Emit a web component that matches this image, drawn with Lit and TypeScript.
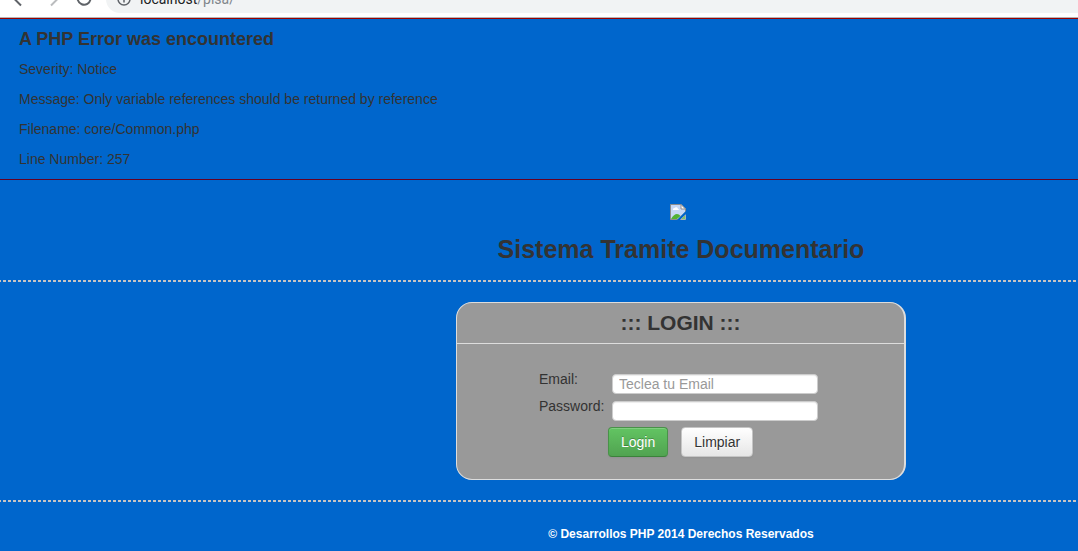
import { LitElement, html, css } from "lit";
import { customElement, state } from "lit/decorators.js";

@customElement("browser-bar")
class BrowserBar extends LitElement {
  static styles = css`
    :host {
      display: flex;
      align-items: flex-end;
      height: 17px;
      overflow: hidden;
      background: #fff;
      border-bottom: 1px solid #b6b4b6;
    }
    .icons {
      display: flex;
      flex: none;
      gap: 18px;
      width: 98px;
      box-sizing: border-box;
      padding: 0 0 10px 8px;
    }
    .icons svg { display: block; width: 16px; height: 16px; }
    .address {
      display: flex;
      flex: 1;
      align-items: center;
      box-sizing: border-box;
      height: 28px;
      margin: 0 0 4px 8px;
      padding-left: 11px;
      gap: 9px;
      background: #f1f3f4;
      border-radius: 14px 0 0 14px;
      font: 14px/20px Roboto, sans-serif;
      color: #202124;
    }
    .address svg { width: 14px; height: 14px; }
    .path { color: #80868b; }
  `;

  render() {
    return html`
      <div class="icons">
        <svg viewBox="0 0 16 16" fill="none" stroke="#5f6368" stroke-width="2"><path d="M16 7.500H6M13 .5L6 7.500l7 7" /></svg>
        <svg viewBox="0 0 16 16" fill="none" stroke="#babcbe" stroke-width="2"><path d="M6 7.500h10M9 .5l7 7-7 7" /></svg>
        <svg viewBox="0 0 16 16" fill="none" stroke="#5f6368" stroke-width="2"><path d="M13 3a6.500 6.500 0 1 0 1.500 5M14 0v5H9" /></svg>
      </div>
      <div class="address">
        <svg viewBox="0 0 14 14" fill="none" stroke="#5f6368" stroke-width="1.500"><circle cx="7" cy="7" r="6" /><path d="M7 6v4.500M7 3v1.500" /></svg>
        <span>localhost<span class="path">/pisa/</span></span>
      </div>
    `;
  }
}

@customElement("php-notice")
class PhpNotice extends LitElement {
  static styles = css`
    :host {
      display: block;
      padding: 10px 19px 0;
      border-top: 1px solid #990000;
      border-bottom: 1px solid #660022;
    }
    h4 { margin: 0 0 10px; font-size: 18px; line-height: 20px; }
    p { margin: 0 0 10px; }
  `;

  private lines = [
    "Severity: Notice",
    "Message: Only variable references should be returned by reference",
    "Filename: core/Common.php",
    "Line Number: 257",
  ];

  render() {
    return html`
      <h4>A PHP Error was encountered</h4>
      ${this.lines.map((line) => html`<p>${line}</p>`)}
    `;
  }
}

@customElement("login-panel")
class LoginPanel extends LitElement {
  static styles = css`
    :host {
      display: block;
      box-sizing: border-box;
      width: 450px;
      border: 1px solid #ddd;
      border-right-width: 2px;
      border-radius: 16px;
      background: #999;
    }
    h3 {
      margin: 0;
      border-bottom: 1px solid #ddd;
      font-size: 21px;
      line-height: 40px;
      text-align: center;
    }
    form { padding: 25px 82px 22px; }
    .fields {
      display: grid;
      grid-template-columns: 73px 206px;
      row-gap: 2px;
      line-height: 20px;
    }
    input {
      box-sizing: border-box;
      width: 100%;
      height: 20px;
      margin: 5px 0 0;
      padding: 0 6px;
      border: 1px solid #ccc;
      border-radius: 4px;
      background: #fff;
      box-shadow: inset 0 1px 1px rgba(0, 0, 0, 0.075);
      color: #555;
      font: 14px/18px "Liberation Sans", Arial, sans-serif;
    }
    input::placeholder { color: #999; }
    .actions { display: flex; gap: 13px; padding: 6px 0 0 69px; }
    button {
      box-sizing: border-box;
      height: 30px;
      padding: 4px 12px;
      border: 1px solid #c5c5c5;
      border-radius: 4px;
      background: linear-gradient(#fff, #e6e6e6);
      box-shadow: inset 0 1px 0 rgba(255, 255, 255, 0.2), 0 1px 2px rgba(0, 0, 0, 0.05);
      color: #333;
      font: 14px/20px "Liberation Sans", Arial, sans-serif;
      text-shadow: 0 1px 1px rgba(255, 255, 255, 0.75);
    }
    .primary {
      border-color: #499249 #499249 #3b823b;
      background: linear-gradient(#62c462, #51a351);
      color: #fff;
      text-shadow: 0 -1px 0 rgba(0, 0, 0, 0.25);
    }
  `;

  @state() private email = "";

  render() {
    return html`
      <h3>::: LOGIN :::</h3>
      <form @submit=${(e: Event) => e.preventDefault()} @reset=${() => (this.email = "")}>
        <div class="fields">
          <label for="email">Email:</label>
          <input id="email" type="text" placeholder="Teclea tu Email" .value=${this.email}
            @input=${(e: Event) => (this.email = (e.target as HTMLInputElement).value)} />
          <label for="password">Password:</label>
          <input id="password" type="password" />
        </div>
        <div class="actions">
          <button class="primary" type="submit">Login</button>
          <button type="reset">Limpiar</button>
        </div>
      </form>
    `;
  }
}

@customElement("app-root")
class AppRoot extends LitElement {
  static styles = css`
    :host {
      display: block;
      min-height: 100vh;
      overflow: hidden;
      background: #0066cc;
      color: #333;
      font: 14px/20px "Liberation Sans", Arial, sans-serif;
    }
    .page {
      display: flex;
      flex-direction: column;
      min-width: 1362px;
    }
    header {
      display: flex;
      flex-direction: column;
      align-items: center;
      padding-top: 24px;
    }
    .logo { width: 16px; height: 16px; margin-right: 6px; }
    h2 { margin: 9px 0 11px; font-size: 25px; line-height: 40px; }
    hr {
      width: 100%;
      height: 2px;
      margin: 0;
      border: 0;
      background: repeating-linear-gradient(90deg, #c8c4c4 0 1px, transparent 1px 3px, #c8c4c4 3px 5px);
    }
    main { display: flex; justify-content: center; padding: 20px 0; }
    footer {
      padding: 22px 0 8px;
      color: #fff;
      font-size: 12px;
      font-weight: bold;
      text-align: center;
    }
  `;

  render() {
    return html`
      <browser-bar></browser-bar>
      <div class="page">
        <php-notice></php-notice>
        <header>
          <svg class="logo" viewBox="0 0 16 16" role="img" aria-label="Logo">
            <path d="M.5.5h10.500l4.500 4.500v3L8 15.500H.5z" fill="#c7d8f5" stroke="#8d8d8d" />
            <path d="M11 .5V5h4.500z" fill="#fff" stroke="#8d8d8d" />
            <path d="M3 6a1.500 1.500 0 0 1 1.500-2 2 2 0 0 1 3.500 1q1 0 1 1z" fill="#fff" />
            <path d="M1 15q3-5 6-5 2 0 3.500 2L7 15z" fill="#53b234" />
            <path d="M15.500 10.500v5H10.500z" fill="#7fc36a" stroke="#a9b3b5" />
            <path d="M16 7L7 16h2.500L16 10z" fill="#0066cc" />
          </svg>
          <h2>Sistema Tramite Documentario</h2>
        </header>
        <hr />
        <main><login-panel></login-panel></main>
        <hr />
        <footer>© Desarrollos PHP 2014 Derechos Reservados</footer>
      </div>
    `;
  }
}
